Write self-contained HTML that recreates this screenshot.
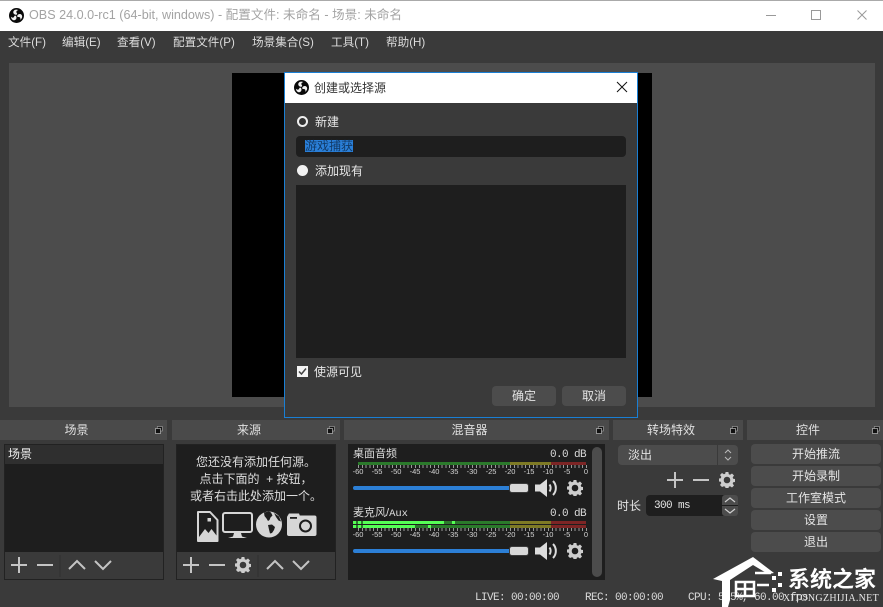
<!DOCTYPE html>
<html><head><meta charset="utf-8">
<style>
html,body{margin:0;padding:0;width:883px;height:607px;overflow:hidden;background:#3a3a3a}
body{position:relative;font-family:"Liberation Sans","Noto Sans CJK SC",sans-serif;font-size:12px;color:#e6e6e6}
div,span,svg{position:absolute;box-sizing:border-box}
.t{white-space:nowrap;line-height:16px}
.m{top:35px;font-size:11.6px;color:#dcdcdc}
.dock{top:420px;height:20px;background:#4a4a4a;text-align:center;line-height:20px;color:#e0e0e0;font-size:12px;padding-right:14px}
.btn{background:#4c4c4c;border-radius:4px;text-align:center;color:#e4e4e4;font-size:12px;line-height:20px;height:20px}
.mono{font-family:"Liberation Mono","Noto Sans CJK SC",monospace;font-size:11px;letter-spacing:-.6px;color:#dadada;white-space:nowrap;line-height:12px}
.num{font-family:"Liberation Sans",sans-serif;font-size:7.5px;color:#d4d4d4;width:20px;text-align:center;line-height:8px}
.ticks{height:3px;left:358px;width:229px;background:repeating-linear-gradient(90deg,#9a9a9a 0,#9a9a9a 1px,transparent 1px,transparent 3.8px)}
.fl{width:8px;height:8px;top:426px}
</style></head><body>
<svg width="0" height="0" style="left:0;top:0">
<defs>
<symbol id="obs" viewBox="0 0 32 32"><circle cx="16" cy="16" r="16" fill="#0a0a0a"/><g fill="#f2f2f2"><path d="M15.500 14.500C11 14.500 8 11 9.500 7 11 3.500 16 2.500 20 4.500 16.500 5 14.500 8 16.500 10.500 18 12.500 17.500 14 15.500 14.500z"/><path transform="rotate(120 16 16)" d="M15.500 14.500C11 14.500 8 11 9.500 7 11 3.500 16 2.500 20 4.500 16.500 5 14.500 8 16.500 10.500 18 12.500 17.500 14 15.500 14.500z"/><path transform="rotate(240 16 16)" d="M15.500 14.500C11 14.500 8 11 9.500 7 11 3.500 16 2.500 20 4.500 16.500 5 14.500 8 16.500 10.500 18 12.500 17.500 14 15.500 14.500z"/></g></symbol>
<symbol id="gear" viewBox="0 0 16 16"><path fill-rule="evenodd" d="M6.600 0h2.800l.4 2.200 1.300.6L13 1.500 15 3.500l-1.300 1.900.5 1.300 2.200.4v2.800l-2.200.4-.5 1.300 1.300 1.900-2 2-1.900-1.300-1.300.5-.4 2.200H6.600l-.4-2.200-1.300-.5L3 15 1 13l1.300-1.900-.5-1.300-2.200-.4V6.600l2.200-.4.500-1.300L1 3l2-2 1.900 1.300 1.300-.5zM8 4.700a3.300 3.300 0 1 0 0 6.600a3.300 3.300 0 1 0 0-6.600z" fill="#cdcdcd"/></symbol>
<symbol id="spk" viewBox="0 0 23 18"><path d="M0 5.500h5L12 0v18l-7-5.500H0z" fill="#dcdcdc"/><path d="M14.500 5.500c1.500 2 1.500 5 0 7M18 2c3.800 3.800 3.800 10.200 0 14" fill="none" stroke="#dcdcdc" stroke-width="2"/></symbol>
<symbol id="float" viewBox="0 0 8 8"><rect x="2.300" y=".5" width="5" height="4.500" fill="#111" stroke="#999" stroke-width=".7"/><rect x=".5" y="2.500" width="5" height="5" fill="#111" stroke="#bbb" stroke-width=".7"/></symbol>
</defs></svg>

<!-- title bar -->
<div style="left:0;top:0;width:883px;height:31px;background:#fff;border-top:1px solid #aaa"></div>
<svg style="left:9px;top:8px" width="15" height="15"><use href="#obs" width="15" height="15"/></svg>
<div class="t" style="left:29px;top:7px;font-size:12.6px;color:#a3a3a3">OBS 24.0.0-rc1 (64-bit, windows) - 配置文件: 未命名 - 场景: 未命名</div>
<svg style="left:760px;top:8px" width="120" height="16" fill="none" stroke="#999"><path d="M6 7.500h10"/><rect x="51.500" y="2.500" width="9" height="9"/><path d="M97.500 2.500l9 9M106.500 2.500l-9 9"/></svg>

<!-- menu -->
<span class="t m" style="left:8px">文件(F)</span>
<span class="t m" style="left:62px">编辑(E)</span>
<span class="t m" style="left:117px">查看(V)</span>
<span class="t m" style="left:173px">配置文件(P)</span>
<span class="t m" style="left:252px">场景集合(S)</span>
<span class="t m" style="left:331px">工具(T)</span>
<span class="t m" style="left:386px">帮助(H)</span>

<!-- preview -->
<div style="left:9px;top:63px;width:866px;height:344px;background:#4c4c4c"></div>
<div style="left:232px;top:73px;width:420px;height:324px;background:#000"></div>

<!-- docks -->
<div class="dock" style="left:0;width:167px">场景</div>
<div class="dock" style="left:172px;width:168px">来源</div>
<div class="dock" style="left:344px;width:265px">混音器</div>
<div class="dock" style="left:613px;width:130px">转场特效</div>
<div class="dock" style="left:747px;width:136px">控件</div>
<svg class="fl" style="left:155px"><use href="#float" width="8" height="8"/></svg>
<svg class="fl" style="left:327px"><use href="#float" width="8" height="8"/></svg>
<svg class="fl" style="left:596px"><use href="#float" width="8" height="8"/></svg>
<svg class="fl" style="left:730px"><use href="#float" width="8" height="8"/></svg>
<svg class="fl" style="left:872px"><use href="#float" width="8" height="8"/></svg>

<!-- scenes -->
<div style="left:4px;top:444px;width:160px;height:136px;background:#1e1e1e;border:1px solid #222"></div>
<div style="left:5px;top:445px;width:158px;height:19px;background:#2f2f2f"></div>
<div class="t" style="left:8px;top:446px;color:#eee">场景</div>
<div style="left:5px;top:552px;width:158px;height:27px;background:#3a3a3a"></div>
<svg style="left:5px;top:552px" width="158" height="27" fill="none" stroke="#c4c4c4" stroke-width="2"><path d="M6 13h16M14 5v16M32 13h16"/><path d="M55 3v22" stroke="#303030" stroke-width="1"/><path d="M64 17l8-8 8 8M90 9l8 8 8-8"/></svg>

<!-- sources -->
<div style="left:176px;top:444px;width:160px;height:136px;background:#1e1e1e;border:1px solid #222"></div>
<div class="t" style="left:177px;top:454px;width:158px;text-align:center;color:#dedede">您还没有添加任何源。</div>
<div class="t" style="left:177px;top:471px;width:158px;text-align:center;color:#dedede">点击下面的 &nbsp;+ 按钮，</div>
<div class="t" style="left:177px;top:488px;width:158px;text-align:center;color:#dedede">或者右击此处添加一个。</div>
<svg style="left:190px;top:505px" width="135" height="40">
<path d="M8 7h12l7.500 8v21H8z" fill="none" stroke="#d6d6d6" stroke-width="2" stroke-linejoin="round"/><path d="M9 35v-3l6-8 3.500 4 3-4 5 6.500V35z" fill="#d6d6d6"/><rect x="17.500" y="13" width="3.500" height="3.500" fill="#d6d6d6"/>
<rect x="33" y="8" width="29" height="19" rx="2" fill="none" stroke="#d6d6d6" stroke-width="2"/><path d="M44 28h7l1 3.500 5 1.500H38l5-1.500z" fill="#d6d6d6"/>
<circle cx="79" cy="19.500" r="13" fill="#d6d6d6"/><path d="M74 7.500l5-1 2 1 1.500 3-2 2-1 2.500-1.500 1-1.500-2.500-2-2.500zM84 8l5 3.500 2 5-2.500-1-2.500-3.500zM78 20l4-.5 3 2.500-1 3-2 3-2 .5-1-4z" fill="#1e1e1e"/>
<rect x="97" y="10.500" width="29.500" height="20.500" rx="2" fill="#d6d6d6"/><path d="M97.500 11l1.500-2.500h10L110 11z" fill="#d6d6d6"/><rect x="100" y="12" width="7" height="1.800" fill="#1e1e1e"/><circle cx="115.500" cy="21" r="5.500" fill="#d6d6d6" stroke="#1e1e1e" stroke-width="2"/>
</svg>
<div style="left:177px;top:552px;width:158px;height:27px;background:#3a3a3a"></div>
<svg style="left:177px;top:552px" width="158" height="27" fill="none" stroke="#c4c4c4" stroke-width="2"><path d="M6 13h16M14 5v16M32 13h16"/><path d="M81 3v22" stroke="#303030" stroke-width="1"/><path d="M90 17l8-8 8 8M116 9l8 8 8-8"/></svg>
<svg style="left:235px;top:557px" width="16" height="16"><use href="#gear" width="16" height="16"/></svg>

<!-- mixer -->
<div style="left:348px;top:444px;width:257px;height:136px;background:#1e1e1e"></div>
<div style="left:592px;top:447px;width:10px;height:130px;background:#4c4c4c;border-radius:5px"></div>
<div class="t" style="left:353px;top:446px;font-size:11px;color:#dcdcdc">桌面音频</div>
<div class="mono" style="left:539px;top:449px;width:47px;text-align:right">0.0 dB</div>
<div style="left:358px;top:462px;width:152px;height:3px;background:#2b7a2b"></div>
<div style="left:510px;top:462px;width:41px;height:3px;background:#7e7a25"></div>
<div style="left:551px;top:462px;width:35px;height:3px;background:#7d2525"></div>
<div class="ticks" style="top:465px"></div>
<div class="num" style="left:348px;top:468px">-60</div><div class="num" style="left:367px;top:468px">-55</div><div class="num" style="left:386px;top:468px">-50</div><div class="num" style="left:405px;top:468px">-45</div><div class="num" style="left:424px;top:468px">-40</div><div class="num" style="left:443px;top:468px">-35</div><div class="num" style="left:462px;top:468px">-30</div><div class="num" style="left:481px;top:468px">-25</div><div class="num" style="left:500px;top:468px">-20</div><div class="num" style="left:519px;top:468px">-15</div><div class="num" style="left:538px;top:468px">-10</div><div class="num" style="left:557px;top:468px">-5</div><div class="num" style="left:576px;top:468px">0</div>
<div style="left:353px;top:486px;width:158px;height:4px;background:#2c7fd6;border-radius:2px"></div>
<div style="left:509px;top:483px;width:20px;height:10px;background:#d8d8d8;border:1px solid #3a3a3a;border-radius:3px"></div>
<svg style="left:535px;top:479px" width="23" height="18"><use href="#spk" width="23" height="18"/></svg>
<svg style="left:567px;top:480px" width="16" height="16"><use href="#gear" width="16" height="16"/></svg>

<div class="t" style="left:353px;top:505px;font-size:11px;color:#dcdcdc">麦克风/<span style="position:static;font-family:'Liberation Mono',monospace;font-size:10.5px">Aux</span></div>
<div class="mono" style="left:539px;top:508px;width:47px;text-align:right">0.0 dB</div>
<div style="left:353px;top:521px;width:157px;height:7px;background:#2b7a2b"></div>
<div style="left:510px;top:521px;width:41px;height:7px;background:#7e7a25"></div>
<div style="left:551px;top:521px;width:35px;height:7px;background:#7d2525"></div>
<div style="left:353px;top:524px;width:233px;height:1px;background:#1e1e1e"></div>
<div style="left:353px;top:521px;width:3px;height:3px;background:#55ff55"></div><div style="left:358px;top:521px;width:3px;height:3px;background:#55ff55"></div>
<div style="left:353px;top:525px;width:3px;height:3px;background:#55ff55"></div><div style="left:358px;top:525px;width:3px;height:3px;background:#55ff55"></div>
<div style="left:363px;top:521px;width:81px;height:3px;background:#55ff55"></div>
<div style="left:452px;top:521px;width:3px;height:3px;background:#55ff55"></div>
<div style="left:363px;top:525px;width:52px;height:3px;background:#55ff55"></div>
<div style="left:428px;top:525px;width:3px;height:3px;background:#55ff55"></div>
<div class="ticks" style="top:528px"></div>
<div class="num" style="left:348px;top:531px">-60</div><div class="num" style="left:367px;top:531px">-55</div><div class="num" style="left:386px;top:531px">-50</div><div class="num" style="left:405px;top:531px">-45</div><div class="num" style="left:424px;top:531px">-40</div><div class="num" style="left:443px;top:531px">-35</div><div class="num" style="left:462px;top:531px">-30</div><div class="num" style="left:481px;top:531px">-25</div><div class="num" style="left:500px;top:531px">-20</div><div class="num" style="left:519px;top:531px">-15</div><div class="num" style="left:538px;top:531px">-10</div><div class="num" style="left:557px;top:531px">-5</div><div class="num" style="left:576px;top:531px">0</div>
<div style="left:353px;top:549px;width:158px;height:4px;background:#2c7fd6;border-radius:2px"></div>
<div style="left:509px;top:546px;width:20px;height:10px;background:#d8d8d8;border:1px solid #3a3a3a;border-radius:3px"></div>
<svg style="left:535px;top:542px" width="23" height="18"><use href="#spk" width="23" height="18"/></svg>
<svg style="left:567px;top:543px" width="16" height="16"><use href="#gear" width="16" height="16"/></svg>

<!-- transitions -->
<div style="left:618px;top:445px;width:120px;height:20px;background:#4c4c4c;border-radius:4px"></div>
<div style="left:717px;top:445px;width:1px;height:20px;background:#3a3a3a"></div>
<div class="t" style="left:628px;top:447px;color:#e0e0e0">淡出</div>
<svg style="left:722px;top:447px" width="12" height="16" fill="none" stroke="#bbb"><path d="M3 6l3-3 3 3M3 10l3 3 3-3"/></svg>
<svg style="left:666px;top:471px" width="50" height="18" fill="none" stroke="#c4c4c4" stroke-width="2"><path d="M1 9h16M9 1v16M27 9h16"/></svg>
<svg style="left:719px;top:472px" width="16" height="16"><use href="#gear" width="16" height="16"/></svg>
<div class="t" style="left:617px;top:498px;color:#e4e4e4">时长</div>
<div style="left:646px;top:495px;width:92px;height:21px;background:#1e1e1e;border-radius:4px"></div>
<div class="mono" style="left:654px;top:500px;color:#e4e4e4">300 ms</div>
<div style="left:722px;top:495px;width:16px;height:10px;background:#4c4c4c;border-radius:3px 3px 0 0"></div>
<div style="left:722px;top:506px;width:16px;height:10px;background:#4c4c4c;border-radius:0 0 3px 3px"></div>
<svg style="left:722px;top:495px" width="16" height="21" fill="none" stroke="#d0d0d0" stroke-width="1.200"><path d="M3 7l5-4 5 4M3 14l5 4 5-4"/></svg>

<!-- controls -->
<div class="btn" style="left:751px;top:444px;width:130px">开始推流</div>
<div class="btn" style="left:751px;top:466px;width:130px">开始录制</div>
<div class="btn" style="left:751px;top:488px;width:130px">工作室模式</div>
<div class="btn" style="left:751px;top:510px;width:130px">设置</div>
<div class="btn" style="left:751px;top:532px;width:130px">退出</div>

<!-- status -->
<div class="mono" style="left:475px;top:592px">LIVE: 00:00:00</div>
<div class="mono" style="left:585px;top:592px">REC: 00:00:00</div>
<div class="mono" style="left:688px;top:592px">CPU: 5.5%, 60.00 fps</div>

<!-- watermark -->
<svg style="left:700px;top:550px" width="90" height="57" fill="#fff"><path d="M13 29L53 7 74 23l-6 1-15-9-23 15v20l-2 7h-6V31z"/><g fill="none" stroke="#fff" stroke-width="2.500"><path d="M36 32h18v14H36zM45 32v14M36 39h18"/><path d="M55 23h16M57 35h12"/></g><rect x="72" y="26" width="4" height="4"/><rect x="78" y="22" width="4" height="4"/><rect x="78" y="33" width="4" height="4"/><rect x="72" y="38" width="4" height="4"/></svg>
<div class="t" style="left:788px;top:566px;font-size:22px;line-height:24px;font-weight:bold;color:#fff;font-family:'Noto Sans CJK SC',sans-serif">系统之家</div>
<div class="t" style="left:783px;top:593px;font-family:'Liberation Serif',serif;font-size:10px;line-height:11px;color:#e8e8e8;letter-spacing:.3px">XITONGZHIJIA.NET</div>

<!-- dialog -->
<div style="left:284px;top:72px;width:354px;height:346px;background:#3a3a3a;border:1px solid #1a7fd4"></div>
<div style="left:285px;top:73px;width:352px;height:30px;background:#fff"></div>
<svg style="left:294px;top:80px" width="15" height="15"><use href="#obs" width="15" height="15"/></svg>
<div class="t" style="left:314px;top:80px;color:#333;font-size:12px">创建或选择源</div>
<svg style="left:616px;top:81px" width="12" height="12" fill="none" stroke="#111"><path d="M1 1l10 10M11 1L1 11"/></svg>
<div style="left:297px;top:116px;width:11px;height:11px;border-radius:50%;background:#333;border:2.500px solid #eee"></div>
<div class="t" style="left:315px;top:114px;color:#e6e6e6">新建</div>
<div style="left:296px;top:136px;width:330px;height:21px;background:#1e1e1e;border-radius:4px"></div>
<div class="t" style="left:305px;top:140px;height:12px;line-height:12px;font-size:12px;background:#2a7fd8;color:#123a66">游戏捕获</div>
<div style="left:297px;top:165px;width:11px;height:11px;border-radius:50%;background:#f2f2f2"></div>
<div class="t" style="left:315px;top:163px;color:#e6e6e6">添加现有</div>
<div style="left:296px;top:185px;width:330px;height:173px;background:#1e1e1e"></div>
<div style="left:297px;top:366px;width:11px;height:11px;background:#f4f4f4"></div>
<svg style="left:297px;top:366px" width="11" height="11" fill="none" stroke="#444" stroke-width="1.500"><path d="M2 5.500l2.500 2.500L9 2.500"/></svg>
<div class="t" style="left:314px;top:364px;color:#e6e6e6">使源可见</div>
<div class="btn" style="left:492px;top:386px;width:64px">确定</div>
<div class="btn" style="left:562px;top:386px;width:64px">取消</div>
</body></html>
